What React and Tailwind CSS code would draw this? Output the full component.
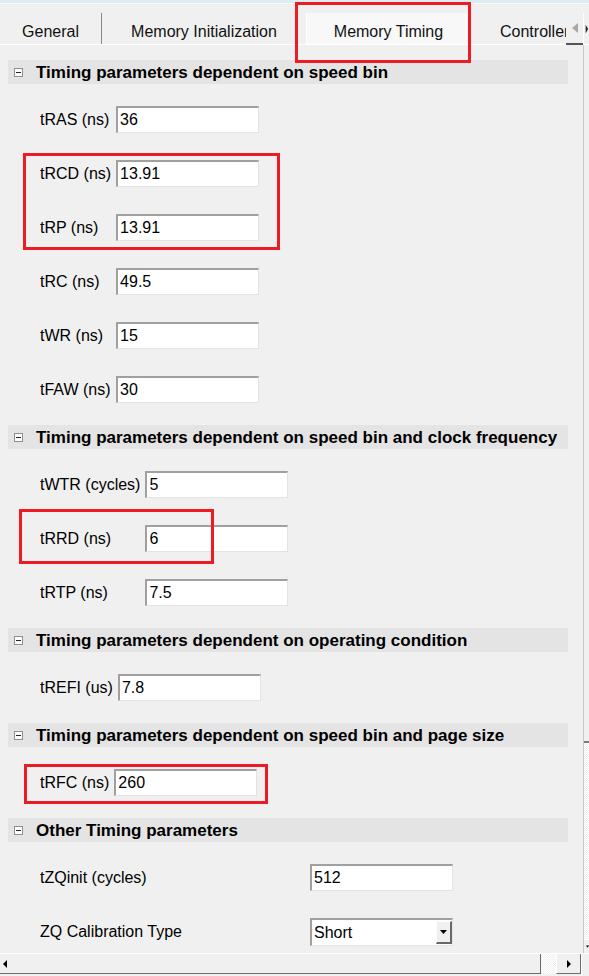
import React from 'react';

const FONT = { fontFamily: '"Liberation Sans", Arial, sans-serif' };

const sections = [
  {
    title: 'Timing parameters dependent on speed bin',
    rows: [
      ['tRAS (ns)', '36'],
      ['tRCD (ns)', '13.91'],
      ['tRP (ns)', '13.91'],
      ['tRC (ns)', '49.5'],
      ['tWR (ns)', '15'],
      ['tFAW (ns)', '30'],
    ],
  },
  {
    title: 'Timing parameters dependent on speed bin and clock frequency',
    rows: [
      ['tWTR (cycles)', '5'],
      ['tRRD (ns)', '6'],
      ['tRTP (ns)', '7.5'],
    ],
  },
  {
    title: 'Timing parameters dependent on operating condition',
    rows: [['tREFI (us)', '7.8']],
  },
  {
    title: 'Timing parameters dependent on speed bin and page size',
    rows: [['tRFC (ns)', '260']],
  },
];

function Field({ value }) {
  return (
    <input
      readOnly
      defaultValue={value}
      className="h-[27px] w-[143px] bg-white border-t-2 border-l-2 border-t-[#a0a0a0] border-l-[#a0a0a0] border-r border-b border-r-[#e3e3e3] border-b-[#e3e3e3] pl-[2px] text-[16px] text-black outline-none"
      style={FONT}
    />
  );
}

function Collapse() {
  return (
    <svg width="9" height="9" viewBox="0 0 9 9" className="shrink-0">
      <rect x="0.5" y="0.5" width="8" height="8" fill="#fff" stroke="#8e8e8e" />
      <rect x="2" y="4" width="5" height="1" fill="#222" />
    </svg>
  );
}

function Heading({ title }) {
  return (
    <div className="h-[24px] w-[560px] bg-[#e4e4e4] flex items-center pl-[6px] gap-[13px]">
      <Collapse />
      <span className="text-[17px] font-bold text-black leading-none">{title}</span>
    </div>
  );
}

function Section({ title, rows }) {
  return (
    <div>
      <Heading title={title} />
      <div className="grid grid-cols-[auto_143px] w-max gap-x-[5px] gap-y-[27px] items-center pl-[32px] py-[22px] text-[16px] text-black">
        {rows.map(([label, value]) => (
          <React.Fragment key={label}>
            <span>{label}</span>
            <Field value={value} />
          </React.Fragment>
        ))}
      </div>
    </div>
  );
}

function Tab({ label, width, selected, sep }) {
  return (
    <div
      className={`h-[31px] shrink-0 flex items-end justify-center pb-[3px] text-[16px] leading-[18px] text-[#111] ${
        selected ? 'bg-[#f8f8f8] border-l border-l-white' : ''
      } ${sep ? 'border-r border-r-[#8a8a8a]' : ''}`}
      style={{ width }}
    >
      {label}
    </div>
  );
}

const dots =
  'bg-[repeating-conic-gradient(#f0f0f0_0%_25%,#ffffff_0%_50%)] bg-[length:2px_2px]';

export default function App() {
  return (
    <div className="relative w-[589px] h-[976px] overflow-hidden bg-[#f0f0f0] text-black" style={FONT}>
      <div className="h-[3px] bg-[#dcedf0]" />
      <div className="h-[1px] bg-[#fafafa]" />

      {/* tab strip */}
      <div className="h-[41px] flex items-start pt-[9px] border-b border-b-white">
        <div className="flex w-[566px] overflow-hidden">
          <Tab label="General" width={102} sep />
          <Tab label="Memory Initialization" width={204} />
          <Tab label="Memory Timing" width={165} selected sep />
          <div className="h-[31px] shrink-0 w-[130px] flex items-end pb-[3px] pl-[29px] text-[16px] leading-[18px] text-[#111]">
            Controller
          </div>
        </div>
        <div className="h-[32px] w-[17px] flex items-center justify-center border-b-2 border-b-[#555] bg-[#f0f0f0]">
          <svg width="6" height="10" viewBox="0 0 6 10">
            <path d="M6 0 L0 5 L6 10 Z" fill="#a8a8a8" />
          </svg>
        </div>
        <div className="h-[32px] w-[6px] border-l border-l-white flex items-center">
          <svg width="6" height="10" viewBox="0 0 6 10">
            <path d="M2 0 L5 5 L2 10 Z" fill="#222" />
          </svg>
        </div>
      </div>

      {/* body */}
      <div className="flex h-[908px]">
        <div className="w-[583px] overflow-hidden pt-[15px] pl-[8px]">
          {sections.map((s) => (
            <Section key={s.title} title={s.title} rows={s.rows} />
          ))}
          <div>
            <Heading title="Other Timing parameters" />
            <div className="grid grid-cols-[270px_143px] gap-y-[27px] items-center pl-[32px] pt-[22px] text-[16px]">
              <span>tZQinit (cycles)</span>
              <Field value="512" />
              <span>ZQ Calibration Type</span>
              <div className="h-[28px] w-[143px] bg-white border-t-2 border-l-2 border-t-[#a0a0a0] border-l-[#a0a0a0] border-r border-b border-r-[#e3e3e3] border-b-[#e3e3e3] flex items-center justify-between">
                <span className="pl-[2px]">Short</span>
                <div className="h-[23px] w-[16px] bg-[#f0f0f0] border-r-2 border-b-2 border-r-[#696969] border-b-[#696969] border-l border-t border-l-white border-t-white flex items-center justify-center">
                  <svg width="7" height="4" viewBox="0 0 7 4">
                    <path d="M0 0 H7 L3.5 4 Z" fill="#000" />
                  </svg>
                </div>
              </div>
            </div>
          </div>
        </div>

        {/* vertical scrollbar (clipped) */}
        <div className="w-[6px] flex flex-col border-l border-l-[#c8c8c8]">
          <div className="h-[698px] bg-[#f0f0f0] border-b-2 border-b-[#7a7a7a]" />
          <div className={`flex-1 ${dots}`} />
          <div className="h-[14px] bg-[#f0f0f0] border-t border-t-white flex items-center pl-[2px]">
            <svg width="4" height="3" viewBox="0 0 4 3">
              <path d="M0 0 H4 L2 3 Z" fill="#000" />
            </svg>
          </div>
        </div>
      </div>

      {/* horizontal scrollbar */}
      <div className="h-[23px] flex border-t border-t-white">
        <div className="w-[541px] h-[20px] flex items-center pl-[3px] border-r border-b border-r-[#6b6b6b] border-b-[#6b6b6b]">
          <svg width="4" height="8" viewBox="0 0 4 8">
            <path d="M4 0 L0 4 L4 8 Z" fill="#000" />
          </svg>
        </div>
        <div className={`w-[15px] h-[20px] ${dots}`} />
        <div className="w-[25px] h-[20px] flex items-center justify-center border-l border-l-white border-r border-b border-r-[#6b6b6b] border-b-[#6b6b6b]">
          <svg width="4" height="8" viewBox="0 0 4 8">
            <path d="M0 0 L4 4 L0 8 Z" fill="#000" />
          </svg>
        </div>
        <div className="flex-1 border-l border-l-white" />
      </div>

      {/* red annotation boxes */}
      <div className="absolute left-[295px] top-[2px] w-[176px] h-[61px] border-[3px] border-[#ed1c24]" />
      <div className="absolute left-[23px] top-[153px] w-[257px] h-[97px] border-[3px] border-[#ed1c24]" />
      <div className="absolute left-[19px] top-[509px] w-[195px] h-[55px] border-[3px] border-[#ed1c24]" />
      <div className="absolute left-[24px] top-[764px] w-[244px] h-[40px] border-[3px] border-[#ed1c24]" />
    </div>
  );
}
